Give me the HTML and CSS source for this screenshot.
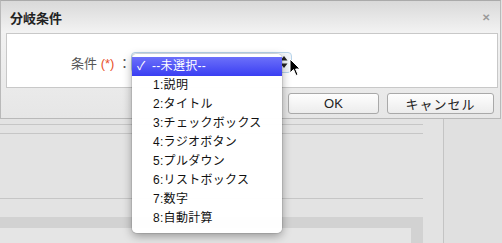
FILE: index.html
```html
<!DOCTYPE html>
<html lang="ja">
<head>
    <meta charset="UTF-8">
    <title>分岐条件</title>
    <link rel="stylesheet" href="styles.css">
</head>
<body>
    <div class="dialog">
        <div class="dialog-header">
            <span class="dialog-title">分岐条件</span>
            <span class="dialog-close">✕</span>
        </div>
        <div class="dialog-body">
            <div class="form-row">
                <label class="field-label">条件 <span class="required">(*)</span> ：</label>
                <div class="select">
                    <span class="select-arrows">
                        <svg width="8" height="14" viewBox="0 0 8 14"><path d="M4 1 L7.5 5.5 H0.5 Z M4 13 L7.5 8.5 H0.5 Z" fill="#222"/></svg>
                    </span>
                    <ul class="select-menu">
                        <li class="selected"><span class="check">✓</span>--未選択--</li>
                        <li>1:説明</li>
                        <li>2:タイトル</li>
                        <li>3:チェックボックス</li>
                        <li>4:ラジオボタン</li>
                        <li>5:プルダウン</li>
                        <li>6:リストボックス</li>
                        <li>7:数字</li>
                        <li>8:自動計算</li>
                    </ul>
                    <svg class="cursor" width="12" height="19" viewBox="0 0 12 19"><path d="M1 1 V15 L4.5 11.5 L7 17.5 L9 16.6 L6.6 11 H11 Z" fill="#000" stroke="#fff" stroke-width="1"/></svg>
                </div>
            </div>
        </div>
        <div class="dialog-footer">
            <button class="btn btn-ok">OK</button>
            <button class="btn btn-cancel">キャンセル</button>
        </div>
    </div>

    <div class="backdrop">
        <div class="main-col">
            <div class="rule rule-a"></div>
            <div class="rule rule-b"></div>
            <div class="rule rule-c"></div>
            <div class="panel"></div>
        </div>
        <div class="side-col"></div>
    </div>
</body>
</html>
```

FILE: styles.css
```css
:root {
    --fundo: #e3e3e3;
    --borda: #b9b9b9;
    --borda-clara: #c8c8c8;
    --texto: #333;
    --vermelho: #e8512a;
    --azul-sel-top: #6c70fa;
    --azul-sel-bot: #3a3ef2;
}

body {
    margin: 0;
    width: 502px;
    height: 243px;
    overflow: hidden;
    background: var(--fundo);
    font-family: "Liberation Sans", "Noto Sans CJK JP", sans-serif;
    color: var(--texto);
}

.dialog {
    position: relative;
    z-index: 2;
    width: 499px;
    border: 1px solid var(--borda);
    border-top-color: #aaa;
    background: linear-gradient(#f6f6f6, #e6e6e6);
}

.dialog-header {
    height: 32px;
    display: flex;
    align-items: center;
    justify-content: space-between;
    padding: 0 10px 0 9px;
    background: linear-gradient(#d9d9d9, #f3f3f3);
}

.dialog-title {
    font-size: 13px;
    font-weight: bold;
    color: #222;
}

.dialog-close {
    font-size: 10px;
    font-weight: bold;
    color: #9a9a9a;
}

.dialog-body {
    padding: 0 2px 0 5px;
}

.form-row {
    height: 53px;
    display: flex;
    align-items: center;
    background: #fff;
    border: 1px solid var(--borda-clara);
}

.field-label {
    width: 124px;
    text-align: right;
    font-size: 13px;
    color: #555;
    padding-top: 3px;
}

.required {
    color: var(--vermelho);
}

.select {
    position: relative;
    width: 161px;
    height: 21px;
    margin-top: 3px;
    border: 1px solid #b8d4ea;
    border-radius: 4px;
    box-sizing: border-box;
    background: #f2f6fa;
}

.select-arrows {
    position: absolute;
    right: 3px;
    top: 2px;
}

.select-menu {
    position: absolute;
    left: 0;
    top: 1px;
    width: 150px;
    margin: 0;
    padding: 3px 0 5px;
    list-style: none;
    background: rgba(255, 255, 255, 0.98);
    border-radius: 5px;
    box-shadow: 0 3px 10px rgba(0, 0, 0, 0.35), 0 0 0 1px rgba(0, 0, 0, 0.08);
}

.select-menu li {
    height: 19px;
    line-height: 19px;
    padding-left: 21px;
    font-size: 12px;
    color: #111;
    letter-spacing: 0.3px;
}

.select-menu li.selected {
    position: relative;
    color: #fff;
    background: linear-gradient(var(--azul-sel-top), var(--azul-sel-bot));
    padding-left: 20px;
}

.check {
    position: absolute;
    left: 5px;
}

.cursor {
    position: absolute;
    left: 157px;
    top: 5px;
}

.dialog-footer {
    height: 30px;
    display: flex;
    justify-content: flex-end;
    align-items: center;
    gap: 8px;
    padding: 0 6px 0 0;
}

.btn {
    height: 21px;
    border: 1px solid #a9a9a9;
    border-radius: 3px;
    background: linear-gradient(#fefefe, #ececec);
    font-family: "Liberation Sans", "Noto Sans CJK JP", sans-serif;
    font-size: 13px;
    color: #222;
    padding: 0;
}

.btn-ok {
    width: 91px;
}

.btn-cancel {
    width: 107px;
    letter-spacing: 1px;
}

.backdrop {
    display: flex;
    height: 124px;
}

.main-col {
    width: 423px;
    padding-top: 5px;
}

.rule {
    border-top: 1px solid #c6c6c6;
}

.rule-b {
    margin-top: 8px;
}

.rule-c {
    margin-top: 64px;
}

.panel {
    margin-top: 18px;
    height: 15px;
    background: #e5e5e5;
    border-top: 11px solid #d2d2d2;
    border-right: 12px solid #d2d2d2;
}

.side-col {
    width: 58px;
    margin-left: 20px;
    border-left: 1px solid #c4c4c4;
    background: #e0e0e0;
}
```
